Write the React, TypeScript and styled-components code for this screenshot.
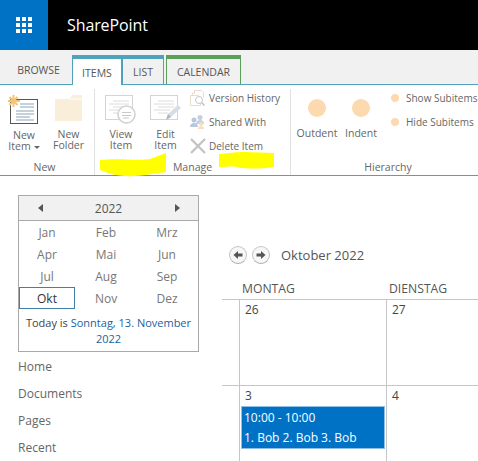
import styled, { createGlobalStyle } from "styled-components";

const GlobalStyle = createGlobalStyle`
  html, body {
    margin: 0;
    padding: 0;
    background: #fff;
    overflow: hidden;
  }
  body {
    font-family: "Open Sans", "Noto Sans", "Liberation Sans", sans-serif;
    color: #444;
  }
`;

const Page = styled.div`
  position: relative;
  width: 478px;
  height: 461px;
  overflow: hidden;
`;

const TopBar = styled.header`
  display: flex;
  align-items: center;
  height: 50px;
  background: #000;
`;

const Launcher = styled.div`
  display: grid;
  place-items: center;
  width: 48px;
  height: 50px;
  background: #0072c6;
`;

const Brand = styled.div`
  margin-left: 19px;
  color: #fff;
  font-size: 16px;
  letter-spacing: -0.1px;
`;

const TabRow = styled.nav`
  display: flex;
  align-items: flex-end;
  box-sizing: border-box;
  height: 35px;
  padding-top: 5px;
  background: #f1f1f1;
  border-bottom: 1px solid #4ea2bb;
`;

const Tab = styled.div<{ $accent?: string; $active?: boolean; $width: number; $gap?: number; $indent?: number }>`
  box-sizing: border-box;
  display: flex;
  align-items: center;
  justify-content: center;
  width: ${(p) => p.$width}px;
  height: ${(p) => (p.$active ? 30 : 29)}px;
  margin-left: ${(p) => p.$gap ?? 0}px;
  margin-bottom: ${(p) => (p.$active ? -1 : 0)}px;
  padding-left: ${(p) => p.$indent ?? 0}px;
  padding-top: 1px;
  font-size: 10.5px;
  color: #555;
  background: ${(p) => (p.$active ? "#fff" : "transparent")};
  border: ${(p) => (p.$accent ? `1px solid ${p.$accent}` : "none")};
  border-top-width: ${(p) => (p.$accent ? 4 : 0)}px;
  border-bottom: none;
`;

const Ribbon = styled.section`
  display: flex;
  box-sizing: border-box;
  height: 91px;
  background: #fff;
  border-bottom: 1px solid #4ea2bb;
`;

const Group = styled.div<{ $width: number; $last?: boolean }>`
  box-sizing: border-box;
  display: flex;
  flex-direction: column;
  width: ${(p) => p.$width}px;
  margin-top: 4px;
  border-right: ${(p) => (p.$last ? "none" : "1px solid #e1e1e1")};
`;

const GroupBody = styled.div<{ $pad: number }>`
  display: flex;
  height: 70px;
  padding-left: ${(p) => p.$pad}px;
`;

const GroupLabel = styled.div<{ $left?: number; $right?: number }>`
  height: 16px;
  padding-left: ${(p) => p.$left ?? 0}px;
  padding-right: ${(p) => p.$right ?? 0}px;
  text-align: center;
  font-size: 10.5px;
  line-height: 16px;
  color: #666;
`;

const LargeButton = styled.div<{ $width: number }>`
  display: flex;
  flex-direction: column;
  align-items: center;
  width: ${(p) => p.$width}px;
  padding-top: 6px;
  font-size: 10.5px;
  line-height: 11px;
  color: #666;
  text-align: center;
`;

const ButtonLabel = styled.div`
  white-space: nowrap;
`;

const IconSlot = styled.div<{ $gap?: number }>`
  height: 30px;
  margin-bottom: ${(p) => p.$gap ?? 4}px;
`;

const Caret = styled.span`
  display: inline-block;
  width: 0;
  height: 0;
  margin-left: 3px;
  vertical-align: 1px;
  border-left: 3px solid transparent;
  border-right: 3px solid transparent;
  border-top: 3px solid #666;
`;

const SmallColumn = styled.div<{ $indent: number }>`
  display: flex;
  flex-direction: column;
  gap: 6px;
  margin-left: ${(p) => p.$indent}px;
`;

const SmallButton = styled.div<{ $gap?: number }>`
  display: flex;
  align-items: center;
  gap: ${(p) => p.$gap ?? 3}px;
  height: 18px;
  font-size: 10px;
  color: #666;
  white-space: nowrap;
`;

const Dot = styled.span`
  flex: none;
  width: 8px;
  height: 8px;
  border-radius: 50%;
  background: #fcd9ae;
`;

const BigDot = styled.div`
  width: 18px;
  height: 18px;
  margin-top: 4px;
  border-radius: 50%;
  background: #fcd9ae;
`;

const Workspace = styled.main`
  display: flex;
`;

const Sidebar = styled.aside`
  box-sizing: border-box;
  width: 222px;
  padding: 19px 0 0 18px;
`;

const Picker = styled.div`
  box-sizing: border-box;
  width: 181px;
  height: 157px;
  border: 1px solid #a9a9a9;
`;

const PickerHead = styled.div`
  display: grid;
  grid-template-columns: 42px 1fr 42px;
  align-items: center;
  height: 24px;
  background: #f1f1f1;
  border-bottom: 1px solid #a9a9a9;
  font-size: 12px;
  color: #555;
  text-align: center;
`;

const Arrow = styled.span<{ $dir: "left" | "right" }>`
  justify-self: center;
  width: 0;
  height: 0;
  border-top: 4px solid transparent;
  border-bottom: 4px solid transparent;
  ${(p) => (p.$dir === "left" ? "border-right: 5px solid #555;" : "border-left: 5px solid #555;")}
`;

const Months = styled.div`
  display: grid;
  grid-template-columns: 56px 62px 60px;
  grid-auto-rows: 22px;
`;

const Month = styled.div<{ $selected?: boolean }>`
  box-sizing: border-box;
  display: flex;
  align-items: center;
  justify-content: center;
  font-size: 12px;
  color: ${(p) => (p.$selected ? "#333" : "#777")};
  border: ${(p) => (p.$selected ? "1px solid #3f7fa8" : "none")};
`;

const Today = styled.div`
  padding-top: 6px;
  text-align: center;
  font-size: 11px;
  line-height: 15.5px;
  color: #444;
  white-space: nowrap;
`;

const TodayLink = styled.span`
  color: #1a5f9e;
`;

const QuickLaunch = styled.ul`
  list-style: none;
  margin: 6px 0 0;
  padding: 0;
`;

const QuickItem = styled.li`
  height: 27px;
  font-size: 12px;
  line-height: 18px;
  color: #666;
`;

const CalendarArea = styled.div`
  flex: 1;
  min-width: 0;
  padding-top: 69px;
`;

const MonthNav = styled.div`
  display: flex;
  align-items: center;
  gap: 5px;
  height: 20px;
  padding-left: 7px;
`;

const MonthTitle = styled.div`
  margin-left: 6px;
  font-size: 13px;
  color: #555;
`;

const RoundButton = styled.div`
  display: grid;
  place-items: center;
  box-sizing: border-box;
  width: 18px;
  height: 18px;
  border-radius: 50%;
  border: 1px solid #c4c4c4;
  border-bottom-color: #aaa;
  background: #f7f7f7;
`;

const DayHeads = styled.div`
  display: grid;
  grid-template-columns: 17px 147px 147px;
  height: 20px;
  margin-top: 14px;
  font-size: 12.2px;
  line-height: 20px;
  color: #555;
  border-bottom: 1px solid #c6c6c6;
`;

const DayHead = styled.div`
  padding-left: 3px;
`;

const Week = styled.div<{ $height: number }>`
  display: grid;
  grid-template-columns: 17px 147px 147px;
  box-sizing: border-box;
  height: ${(p) => p.$height}px;
  border-bottom: 1px solid #c6c6c6;
`;

const Cell = styled.div`
  box-sizing: border-box;
  padding: 2px 0 0 5px;
  font-size: 12px;
  line-height: 16px;
  color: #444;
  border-left: 1px solid #c6c6c6;
`;

const Event = styled.div`
  box-sizing: border-box;
  width: 144px;
  height: 43px;
  margin: 2px 0 0 -4px;
  padding: 1px 2px;
  background: #0072c6;
  border: 1px solid #8fbfe3;
  color: #fff;
  font-size: 12px;
  line-height: 19.5px;
  white-space: nowrap;
`;

// marker strokes drawn over the ribbon in the screenshot
const Highlight = styled.svg`
  position: absolute;
  top: 150px;
  left: 95px;
  pointer-events: none;
`;

const launcherDots = [0, 1, 2].flatMap((y) => [0, 1, 2].map((x) => ({ x: x * 6, y: y * 6 })));

function NewItemIcon() {
  return (
    <svg width="32" height="30" viewBox="0 0 32 30">
      <rect x="2.5" y="4.5" width="27" height="24" fill="#fff" stroke="#555" />
      <path d="M12 9h14M12 12h14M8 16h18M8 19h18M8 22h14M8 25h18" stroke="#8aa3b8" strokeWidth="1" />
      <path d="M5.5 0v12M0 6h12M1.5 2l8 8M9.5 2l-8 8" stroke="#f3c677" strokeWidth="2" />
    </svg>
  );
}

function FolderIcon() {
  return (
    <svg width="28" height="28" viewBox="0 0 28 28">
      <path d="M0 4h14l4-4h9v26H0z" fill="#f8eed9" />
      <path d="M14 4h13" stroke="#fff" />
    </svg>
  );
}

function PageLines() {
  return (
    <>
      <rect x="0.5" y="0.5" width="27" height="24" fill="#fff" stroke="#d4d4d4" />
      <path d="M8 6h16M4 9h20M8 12h16M4 15h16M8 18h10" stroke="#dcdcdc" />
    </>
  );
}

function ViewItemIcon() {
  return (
    <svg width="32" height="30" viewBox="0 0 32 30">
      <PageLines />
      <circle cx="21.5" cy="19.5" r="8.5" fill="#fff" stroke="#d0d0d0" strokeWidth="1.5" />
      <path d="M17 17.5h9M17 20.5h9M18 23h6" stroke="#c9c9c9" />
    </svg>
  );
}

function EditItemIcon() {
  return (
    <svg width="32" height="30" viewBox="0 0 32 30">
      <PageLines />
      <path d="M16 25l2-6L28 10l3 3-10 9z" fill="#d6dde8" />
      <path d="M16 25l2-6 3 3z" fill="#aeb6c2" />
    </svg>
  );
}

function VersionIcon() {
  return (
    <svg width="16" height="16" viewBox="0 0 16 16">
      <path d="M4.5 3.5V.5h7l2 2v5M2.5 5.5V3h2M.5 5.5h8l2 2v8h-10z" fill="#fff" stroke="#eadccb" />
      <circle cx="9" cy="10" r="3.5" fill="#fff" stroke="#c8c8c8" />
      <path d="M11.5 12.5l3 3" stroke="#c0c0c0" strokeWidth="1.5" />
    </svg>
  );
}

function SharedIcon() {
  return (
    <svg width="16" height="16" viewBox="0 0 16 16">
      <circle cx="10" cy="3.5" r="2.5" fill="#c3d0e2" />
      <path d="M6 10c0-3 2-4 4-4s4 1 4 4z" fill="#c3d0e2" />
      <circle cx="4" cy="6" r="2.5" fill="#b6c7de" />
      <path d="M0 13c0-3 2-4 4-4s4 1 4 4z" fill="#b6c7de" />
      <circle cx="11" cy="10" r="2" fill="#f6dfc0" />
      <path d="M8 15c0-2 1.5-3 3-3s3 1 3 3z" fill="#f6dfc0" />
    </svg>
  );
}

function DeleteIcon() {
  return (
    <svg width="16" height="16" viewBox="0 0 16 16">
      <path d="M1 1l14 14M15 1L1 15" stroke="#c4c4c4" strokeWidth="2.4" />
    </svg>
  );
}

function NavArrow({ flip }: { flip?: boolean }) {
  return (
    <svg width="10" height="10" viewBox="0 0 10 10" style={flip ? { transform: "scaleX(-1)" } : undefined}>
      <path d="M0.5 5L5 1v2.5h4.5v3H5V9z" fill="#555" />
    </svg>
  );
}

const quickLinks = ["Home", "Documents", "Pages", "Recent"];
const months = ["Jan", "Feb", "Mrz", "Apr", "Mai", "Jun", "Jul", "Aug", "Sep", "Okt", "Nov", "Dez"];

export default function App() {
  return (
    <Page>
      <GlobalStyle />
      <TopBar>
        <Launcher>
          <svg width="16" height="16" viewBox="0 0 16 16">
            {launcherDots.map((d) => (
              <rect key={`${d.x}-${d.y}`} x={d.x} y={d.y} width="4" height="4" fill="#fff" />
            ))}
          </svg>
        </Launcher>
        <Brand>SharePoint</Brand>
      </TopBar>

      <TabRow>
        <Tab $width={72} $indent={5}>BROWSE</Tab>
        <Tab $width={50} $active $accent="#4ea2bb">ITEMS</Tab>
        <Tab $width={42} $accent="#4ea2bb">LIST</Tab>
        <Tab $width={75} $gap={2} $accent="#5aa05a">CALENDAR</Tab>
      </TabRow>

      <Ribbon>
        <Group $width={95}>
          <GroupBody $pad={2}>
            <LargeButton $width={44}>
              <IconSlot $gap={5}><NewItemIcon /></IconSlot>
              <ButtonLabel>New<br />Item<Caret /></ButtonLabel>
            </LargeButton>
            <LargeButton $width={45}>
              <IconSlot><FolderIcon /></IconSlot>
              <ButtonLabel>New<br />Folder</ButtonLabel>
            </LargeButton>
          </GroupBody>
          <GroupLabel $right={5}>New</GroupLabel>
        </Group>
        <Group $width={196}>
          <GroupBody $pad={4}>
            <LargeButton $width={44}>
              <IconSlot><ViewItemIcon /></IconSlot>
              <ButtonLabel>View<br />Item</ButtonLabel>
            </LargeButton>
            <LargeButton $width={45}>
              <IconSlot><EditItemIcon /></IconSlot>
              <ButtonLabel>Edit<br />Item</ButtonLabel>
            </LargeButton>
            <SmallColumn $indent={2}>
              <SmallButton><VersionIcon />Version History</SmallButton>
              <SmallButton><SharedIcon />Shared With</SmallButton>
              <SmallButton><DeleteIcon />Delete Item</SmallButton>
            </SmallColumn>
          </GroupBody>
          <GroupLabel>Manage</GroupLabel>
        </Group>
        <Group $width={187} $last>
          <GroupBody $pad={4}>
            <LargeButton $width={44}>
              <IconSlot $gap={3}><BigDot /></IconSlot>
              <ButtonLabel>Outdent</ButtonLabel>
            </LargeButton>
            <LargeButton $width={44}>
              <IconSlot $gap={3}><BigDot /></IconSlot>
              <ButtonLabel>Indent</ButtonLabel>
            </LargeButton>
            <SmallColumn $indent={8}>
              <SmallButton $gap={7}><Dot />Show Subitems</SmallButton>
              <SmallButton $gap={7}><Dot />Hide Subitems</SmallButton>
            </SmallColumn>
          </GroupBody>
          <GroupLabel $left={7}>Hierarchy</GroupLabel>
        </Group>
      </Ribbon>

      <Workspace>
        <Sidebar>
          <Picker>
            <PickerHead>
              <Arrow $dir="left" />
              2022
              <Arrow $dir="right" />
            </PickerHead>
            <Months>
              {months.map((m) => (
                <Month key={m} $selected={m === "Okt"}>{m}</Month>
              ))}
            </Months>
            <Today>
              Today is <TodayLink>Sonntag, 13. November<br />2022</TodayLink>
            </Today>
          </Picker>
          <QuickLaunch>
            {quickLinks.map((l) => (
              <QuickItem key={l}>{l}</QuickItem>
            ))}
          </QuickLaunch>
        </Sidebar>

        <CalendarArea>
          <MonthNav>
            <RoundButton><NavArrow /></RoundButton>
            <RoundButton><NavArrow flip /></RoundButton>
            <MonthTitle>Oktober 2022</MonthTitle>
          </MonthNav>
          <DayHeads>
            <div />
            <DayHead>MONTAG</DayHead>
            <DayHead>DIENSTAG</DayHead>
          </DayHeads>
          <Week $height={86}>
            <div />
            <Cell>26</Cell>
            <Cell>27</Cell>
          </Week>
          <Week $height={90}>
            <div />
            <Cell>
              3
              <Event>10:00 - 10:00<br />1. Bob 2. Bob 3. Bob</Event>
            </Cell>
            <Cell>4</Cell>
          </Week>
        </CalendarArea>
      </Workspace>

      <Highlight width="190" height="30" viewBox="0 0 190 30">
        <path d="M5 10C20 8 45 11 55 9L71 3V22C55 24 45 27 30 26C20 26 10 22 5 20z" fill="#ffff00" />
        <path d="M124 4C135 3 140 2 150 2C160 2 170 3 179 3V17C165 19 150 19 142 17C135 16 130 17 124 17z" fill="#ffff00" />
      </Highlight>
    </Page>
  );
}
